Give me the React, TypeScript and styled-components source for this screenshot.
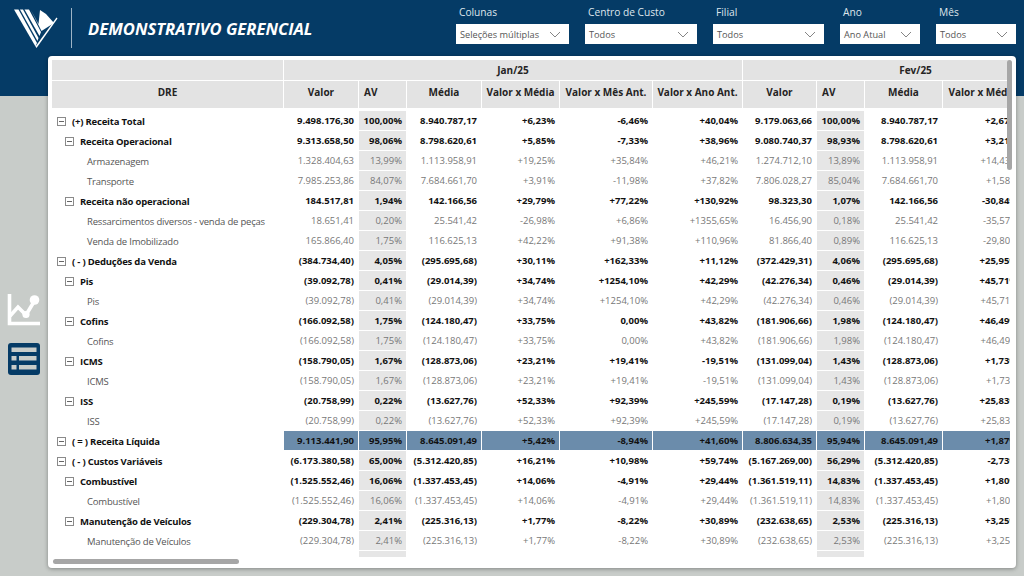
import React, { ReactElement } from 'react'
import styled, { createGlobalStyle } from 'styled-components'

const NAVY = '#053b66'
const FONT = `'Open Sans', 'Noto Sans', sans-serif`
const COLUMNS = '232px 75px 48px 75px 78px 93px 90px 74px 48px 78px 80px 66px'

type Level = 0 | 1 | 2

type RowData = {
  label: string
  level: Level
  values: string[]
  highlight?: boolean
}

const FILTERS = [
  { label: 'Colunas', value: 'Seleções múltiplas', width: 113 },
  { label: 'Centro de Custo', value: 'Todos', width: 112 },
  { label: 'Filial', value: 'Todos', width: 111 },
  { label: 'Ano', value: 'Ano Atual', width: 80 },
  { label: 'Mês', value: 'Todos', width: 80 },
]

const SUB_HEADERS = ['Valor', 'AV', 'Média', 'Valor x Média', 'Valor x Mês Ant.', 'Valor x Ano Ant.', 'Valor', 'AV', 'Média', 'Valor x Média']

const R = (label: string, level: Level, line: string, highlight?: boolean): RowData => ({
  label,
  level,
  values: line.split(' '),
  highlight,
})

const ROWS: RowData[] = [
  R('(+) Receita Total', 0, '9.498.176,30 100,00% 8.940.787,17 +6,23% -6,46% +40,04% 9.179.063,66 100,00% 8.940.787,17 +2,67%'),
  R('Receita Operacional', 1, '9.313.658,50 98,06% 8.798.620,61 +5,85% -7,33% +38,96% 9.080.740,37 98,93% 8.798.620,61 +3,21%'),
  R('Armazenagem', 2, '1.328.404,63 13,99% 1.113.958,91 +19,25% +35,84% +46,21% 1.274.712,10 13,89% 1.113.958,91 +14,43%'),
  R('Transporte', 2, '7.985.253,86 84,07% 7.684.661,70 +3,91% -11,98% +37,82% 7.806.028,27 85,04% 7.684.661,70 +1,58%'),
  R('Receita não operacional', 1, '184.517,81 1,94% 142.166,56 +29,79% +77,22% +130,92% 98.323,30 1,07% 142.166,56 -30,84%'),
  R('Ressarcimentos diversos - venda de peças', 2, '18.651,41 0,20% 25.541,42 -26,98% +6,86% +1355,65% 16.456,90 0,18% 25.541,42 -35,57%'),
  R('Venda de Imobilizado', 2, '165.866,40 1,75% 116.625,13 +42,22% +91,38% +110,96% 81.866,40 0,89% 116.625,13 -29,80%'),
  R('( - ) Deduções da Venda', 0, '(384.734,40) 4,05% (295.695,68) +30,11% +162,33% +11,12% (372.429,31) 4,06% (295.695,68) +25,95%'),
  R('Pis', 1, '(39.092,78) 0,41% (29.014,39) +34,74% +1254,10% +42,29% (42.276,34) 0,46% (29.014,39) +45,71%'),
  R('Pis', 2, '(39.092,78) 0,41% (29.014,39) +34,74% +1254,10% +42,29% (42.276,34) 0,46% (29.014,39) +45,71%'),
  R('Cofins', 1, '(166.092,58) 1,75% (124.180,47) +33,75% 0,00% +43,82% (181.906,66) 1,98% (124.180,47) +46,49%'),
  R('Cofins', 2, '(166.092,58) 1,75% (124.180,47) +33,75% 0,00% +43,82% (181.906,66) 1,98% (124.180,47) +46,49%'),
  R('ICMS', 1, '(158.790,05) 1,67% (128.873,06) +23,21% +19,41% -19,51% (131.099,04) 1,43% (128.873,06) +1,73%'),
  R('ICMS', 2, '(158.790,05) 1,67% (128.873,06) +23,21% +19,41% -19,51% (131.099,04) 1,43% (128.873,06) +1,73%'),
  R('ISS', 1, '(20.758,99) 0,22% (13.627,76) +52,33% +92,39% +245,59% (17.147,28) 0,19% (13.627,76) +25,83%'),
  R('ISS', 2, '(20.758,99) 0,22% (13.627,76) +52,33% +92,39% +245,59% (17.147,28) 0,19% (13.627,76) +25,83%'),
  R('( = ) Receita Líquida', 0, '9.113.441,90 95,95% 8.645.091,49 +5,42% -8,94% +41,60% 8.806.634,35 95,94% 8.645.091,49 +1,87%', true),
  R('( - ) Custos Variáveis', 0, '(6.173.380,58) 65,00% (5.312.420,85) +16,21% +10,98% +59,74% (5.167.269,00) 56,29% (5.312.420,85) -2,73%'),
  R('Combustível', 1, '(1.525.552,46) 16,06% (1.337.453,45) +14,06% -4,91% +29,44% (1.361.519,11) 14,83% (1.337.453,45) +1,80%'),
  R('Combustível', 2, '(1.525.552,46) 16,06% (1.337.453,45) +14,06% -4,91% +29,44% (1.361.519,11) 14,83% (1.337.453,45) +1,80%'),
  R('Manutenção de Veículos', 1, '(229.304,78) 2,41% (225.316,13) +1,77% -8,22% +30,89% (232.638,65) 2,53% (225.316,13) +3,25%'),
  R('Manutenção de Veículos', 2, '(229.304,78) 2,41% (225.316,13) +1,77% -8,22% +30,89% (232.638,65) 2,53% (225.316,13) +3,25%'),
]

const isAv = (index: number) => index === 1 || index === 7

const Logo = (): ReactElement => (
  <svg width="48" height="44" viewBox="14 6 48 44" fill="#fff">
    <polygon points="14,9.5 18.5,9.5 37,43 35.5,46.5" />
    <polygon points="20,9.5 23,9.5 38.5,38 37.5,41" />
    <polygon points="24.5,9.5 29,9.5 41,32 39.5,36" />
    <polygon points="31,10 38.5,24 40,10 46,14 54,23 41.5,31" />
    <polygon points="35.5,46.5 56.5,17.5 57.5,18.5 36.5,48" />
  </svg>
)

const ChartIcon = (): ReactElement => (
  <svg width="34" height="34" viewBox="0 0 34 34" fill="none" stroke="#fff">
    <path d="M2.5 1v29.5H33" strokeWidth="3.6" />
    <path d="M3 23l8-9 8 8 9-15" strokeWidth="3.6" />
    <circle cx="27.5" cy="7" r="4.8" fill="#fff" stroke="none" />
    <circle cx="19" cy="21.5" r="3.6" fill="#fff" stroke="none" />
  </svg>
)

const TableIcon = (): ReactElement => (
  <svg width="32" height="32" viewBox="0 0 32 32">
    <rect width="32" height="32" rx="3" fill={NAVY} />
    <rect x="3.5" y="4.5" width="25" height="4.5" fill="#c8ccc9" />
    <rect x="3.5" y="13" width="5" height="4.5" fill="#c8ccc9" />
    <rect x="11" y="13" width="17.5" height="4.5" fill="#c8ccc9" />
    <rect x="3.5" y="22" width="5" height="4.5" fill="#c8ccc9" />
    <rect x="11" y="22" width="17.5" height="4.5" fill="#c8ccc9" />
  </svg>
)

const Chevron = (): ReactElement => (
  <svg width="12" height="7" viewBox="0 0 12 7" fill="none" stroke="#777" strokeWidth="0.9">
    <path d="M1 1l5 5 5-5" />
  </svg>
)

const App = (): ReactElement => (
  <Page>
    <GlobalStyle />
    <Header>
      <Brand>
        <Logo />
        <Divider />
        <Title>DEMONSTRATIVO GERENCIAL</Title>
      </Brand>
      <Filters>
        {FILTERS.map((filter) => (
          <Filter key={filter.label} $width={filter.width}>
            <FilterLabel>{filter.label}</FilterLabel>
            <Select>
              {filter.value}
              <Chevron />
            </Select>
          </Filter>
        ))}
      </Filters>
    </Header>
    <Body>
      <Sidebar>
        <ChartIcon />
        <TableIcon />
      </Sidebar>
      <Card>
        <Table>
          <HeaderRow $height={20}>
            <HeaderCell />
            <HeaderCell $span={6}>Jan/25</HeaderCell>
            <HeaderCell $span={5}>Fev/25</HeaderCell>
          </HeaderRow>
          <HeaderRow $height={27} $lift>
            <HeaderCell>DRE</HeaderCell>
            {SUB_HEADERS.map((title, index) => (
              <HeaderCell key={index} $start={isAv(index)}>
                {title}
              </HeaderCell>
            ))}
            <HeaderCell />
          </HeaderRow>
          <Rows>
            {ROWS.map((row, index) => (
              <Row key={index}>
                <LabelCell $level={row.level}>
                  {row.level < 2 && <Expander />}
                  {row.label}
                </LabelCell>
                {row.values.map((value, col) => (
                  <ValueCell key={col} $leaf={row.level === 2} $av={isAv(col)} $highlight={row.highlight}>
                    {value}
                  </ValueCell>
                ))}
              </Row>
            ))}
            <StubRow>
              <span />
              <span />
              <Stub />
              <span />
              <span />
              <span />
              <span />
              <span />
              <Stub />
            </StubRow>
          </Rows>
        </Table>
        <VerticalThumb />
        <HorizontalThumb />
      </Card>
    </Body>
  </Page>
)

export default App

const GlobalStyle = createGlobalStyle`
  html, body {
    margin: 0;
    padding: 0;
    background: #fff;
  }
`

const Page = styled.div`
  width: 1024px;
  height: 584px;
  overflow: hidden;
  font-family: ${FONT};
  background: linear-gradient(to bottom, ${NAVY} 0, ${NAVY} 96px, #c8ccc9 96px, #c8ccc9 576px, #fff 576px);
`

const Header = styled.div`
  display: flex;
  justify-content: space-between;
  height: 56px;
  padding: 0 8px 0 14px;
`

const Brand = styled.div`
  display: flex;
  align-items: center;
`

const Divider = styled.div`
  width: 1px;
  height: 40px;
  margin: 0 16px 0 9px;
  background: #9fb4c6;
`

const Title = styled.div`
  color: #fff;
  font-size: 16.6px;
  font-weight: 700;
  font-style: italic;
  white-space: nowrap;
`

const Filters = styled.div`
  display: flex;
  gap: 16px;
  padding-top: 4px;
`

const Filter = styled.div<{ $width: number }>`
  display: flex;
  flex-direction: column;
  width: ${(props) => props.$width}px;
`

const FilterLabel = styled.div`
  height: 20px;
  padding: 1px 0 0 3px;
  box-sizing: border-box;
  color: #dfe6ec;
  font-size: 10.2px;
  line-height: 15px;
`

const Select = styled.div`
  display: flex;
  align-items: center;
  justify-content: space-between;
  height: 20px;
  padding: 0 8px 0 4px;
  background: #fff;
  color: #555;
  font-size: 9.2px;
  white-space: nowrap;
`

const Body = styled.div`
  display: grid;
  grid-template-columns: 48px 968px;
`

const Sidebar = styled.div`
  display: flex;
  flex-direction: column;
  align-items: center;
  gap: 16px;
  padding-top: 237px;
`

const Card = styled.div`
  position: relative;
  height: 512px;
  padding: 4px 0 0 4px;
  box-sizing: border-box;
  overflow: hidden;
  background: #fff;
  border-radius: 4px;
  box-shadow: 0 1px 4px rgba(0, 0, 0, 0.35);
`

const Table = styled.div`
  width: 958px;
  overflow: hidden;
  color: #222;
  font-size: 9.5px;
`

const HeaderRow = styled.div<{ $height: number; $lift?: boolean }>`
  display: grid;
  grid-template-columns: ${COLUMNS};
  height: ${(props) => props.$height}px;
  margin-bottom: 1px;

  & > div {
    padding-bottom: ${(props) => (props.$lift ? '5px' : '0')};
  }
`

const HeaderCell = styled.div<{ $span?: number; $start?: boolean }>`
  display: flex;
  align-items: center;
  justify-content: ${(props) => (props.$start ? 'flex-start' : 'center')};
  grid-column: span ${(props) => props.$span ?? 1};
  padding-left: ${(props) => (props.$start ? '5px' : '0')};
  background: #e3e3e3;
  border-right: 1px solid #fff;
  color: #252423;
  font-size: 10px;
  font-weight: 700;
  white-space: nowrap;
`

const Rows = styled.div`
  padding-top: 2px;
`

const Row = styled.div`
  display: grid;
  grid-template-columns: ${COLUMNS};
  height: 20px;
`

const LabelCell = styled.div<{ $level: Level }>`
  display: flex;
  align-items: center;
  gap: 6px;
  padding-left: ${(props) => [5, 13, 35][props.$level]}px;
  color: ${(props) => (props.$level === 2 ? '#555' : '#111')};
  font-weight: ${(props) => (props.$level === 2 ? 400 : 700)};
  letter-spacing: -0.2px;
  white-space: nowrap;
`

const Expander = styled.span`
  position: relative;
  width: 7px;
  height: 7px;
  flex: none;
  border: 1px solid #8a8a8a;

  &::after {
    content: '';
    position: absolute;
    left: 1px;
    right: 1px;
    top: 3px;
    height: 1px;
    background: #666;
  }
`

const ValueCell = styled.div<{ $leaf: boolean; $av: boolean; $highlight?: boolean }>`
  display: flex;
  align-items: center;
  justify-content: flex-end;
  padding-right: 4px;
  border-right: 1px solid ${(props) => (props.$highlight || props.$av ? '#fff' : 'transparent')};
  border-bottom: 1px solid ${(props) => (props.$highlight || props.$av ? '#fff' : 'transparent')};
  background: ${(props) => (props.$highlight ? '#6b8cab' : props.$av ? '#e6e6e6' : 'transparent')};
  color: ${(props) => (props.$leaf ? '#777' : '#111')};
  font-weight: ${(props) => (props.$leaf ? 400 : 700)};
  white-space: nowrap;
`

const StubRow = styled.div`
  display: grid;
  grid-template-columns: ${COLUMNS};
  height: 6px;
`

const Stub = styled.div`
  background: #e6e6e6;
  border-right: 1px solid #fff;
`

const VerticalThumb = styled.div`
  position: absolute;
  top: 4px;
  right: 4px;
  width: 5px;
  height: 110px;
  border-radius: 3px;
  background: #a6a6a6;
`

const HorizontalThumb = styled.div`
  position: absolute;
  left: 5px;
  bottom: 4px;
  width: 186px;
  height: 5px;
  border-radius: 3px;
  background: #a6a6a6;
`
